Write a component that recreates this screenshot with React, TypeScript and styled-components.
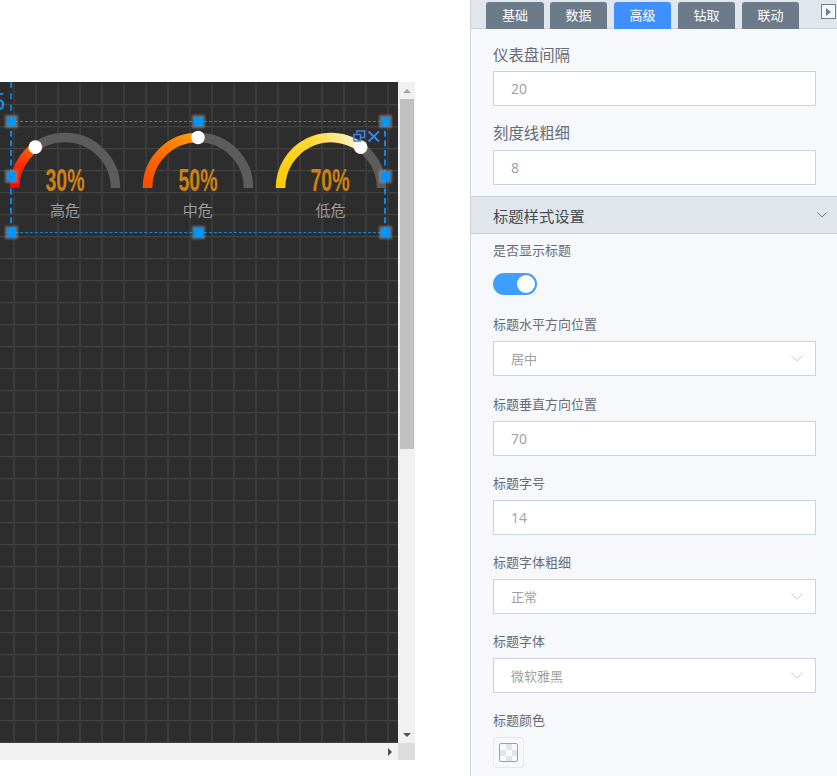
import React from "react";
import styled, { createGlobalStyle } from "styled-components";

const Global = createGlobalStyle`
  html, body { margin: 0; padding: 0; background: #fff; }
  body { font-family: "Noto Sans CJK SC", "Liberation Sans", sans-serif; }
  * { box-sizing: border-box; }
`;

const Page = styled.div`
  display: flex;
  width: 837px;
  height: 776px;
  overflow: hidden;
`;
const Stage = styled.div`
  width: 470px;
  padding-top: 82px;
  flex: none;
`;
const Frame = styled.div`
  display: grid;
  grid-template-columns: 398px 17px;
  grid-template-rows: 661px 17px;
  width: 415px;
`;
const Canvas = styled.div`
  position: relative;
  overflow: hidden;
  background-color: #2d2d2d;
  background-image:
    linear-gradient(to bottom, #424242 0, #424242 1px, #343434 1px, #343434 2px, transparent 2px),
    linear-gradient(to right, transparent 13px, #3a3a3a 13px, #3a3a3a 15px, transparent 15px);
  background-size: 22px 22px;
  box-shadow: inset 0 2px 0 #2d2d2d;
`;
const VTrack = styled.div`
  display: flex;
  flex-direction: column;
  align-items: center;
  background: #f1f1f1;
`;
const HTrack = styled.div`
  display: flex;
  justify-content: flex-end;
  align-items: center;
  background: #f1f1f1;
`;
const Corner = styled.div`
  background: #dcdcdc;
`;
const ArrowBox = styled.div<{ $end?: boolean }>`
  flex: none;
  width: 17px;
  height: 17px;
  display: flex;
  align-items: center;
  justify-content: center;
  margin-top: ${(p) => (p.$end ? "auto" : "0")};
`;
const Thumb = styled.div`
  width: 14px;
  height: 350px;
  margin-left: 1px;
  background: #c1c1c1;
`;
const TriUp = styled.div`
  width: 0;
  height: 0;
  border-left: 4px solid transparent;
  border-right: 4px solid transparent;
  border-bottom: 4px solid #a3a3a3;
`;
const TriDown = styled.div`
  width: 0;
  height: 0;
  border-left: 4px solid transparent;
  border-right: 4px solid transparent;
  border-top: 4px solid #505050;
`;
const TriRight = styled.div`
  width: 0;
  height: 0;
  border-top: 4px solid transparent;
  border-bottom: 4px solid transparent;
  border-left: 4px solid #505050;
`;
const StrayDigit = styled.div`
  position: absolute;
  left: -8px;
  top: 7px;
  font: 24px/26px "Liberation Sans", sans-serif;
  color: #0c93f5;
`;
const GuideLine = styled.div`
  position: absolute;
  left: 10px;
  top: 0;
  height: 40px;
  border-left: 2px dashed #0a7fd0;
`;
const Selection = styled.div`
  position: absolute;
  left: 10px;
  top: 39px;
  width: 376px;
  height: 112px;
  border-style: dashed;
  border-color: #0a8ae6;
  border-width: 1px 2px;
`;
const GaugeRow = styled.div`
  display: flex;
  gap: 22.75px;
  margin-left: -2px;
  padding-top: 11px;
`;
const Gauge = styled.div`
  display: flex;
  flex-direction: column;
  align-items: center;
  width: 110px;
`;
const GaugeArc = styled.svg`
  display: block;
  flex: none;
  overflow: visible;
`;
const GaugeValue = styled.div`
  margin-top: -23px;
  height: 31px;
  font: 700 31px/31px "Liberation Sans", sans-serif;
  color: #cf8210;
  transform: scaleX(0.63);
  white-space: nowrap;
`;
const GaugeLabel = styled.div`
  margin-top: 4px;
  font-size: 15px;
  line-height: 20px;
  color: #9c9c9c;
`;
const Handle = styled.div<{ $x: number; $y: number }>`
  position: absolute;
  left: ${(p) => p.$x - 4.5}px;
  top: ${(p) => p.$y - 4.5}px;
  width: 9px;
  height: 9px;
  background: #0095ff;
  box-shadow: 0 0 2px 2px rgba(150, 160, 170, 0.55);
`;
const ToolIcons = styled.svg`
  position: absolute;
  left: 353px;
  top: 48px;
`;

const Panel = styled.div`
  flex: 1;
  min-width: 0;
  height: 776px;
  background: #f6f8fb;
  border-left: 1px solid #c8d2e0;
`;
const TabStrip = styled.div`
  display: flex;
  gap: 7px;
  height: 29px;
  padding: 2px 1px 0 15px;
  background: #e1e6eb;
  border-bottom: 1px solid #c8d2e0;
`;
const Tab = styled.div<{ $active?: boolean }>`
  width: 57px;
  height: 27px;
  border-radius: 3px 3px 0 0;
  background: ${(p) => (p.$active ? "#3f8fff" : "#6c7a8a")};
  color: #fff;
  font-size: 13px;
  line-height: 26px;
  text-align: center;
  &:first-child {
    width: 58px;
    margin-right: -1px;
  }
`;
const Collapse = styled.div`
  margin-left: auto;
  margin-top: 2px;
  width: 15px;
  height: 15px;
  display: flex;
  align-items: center;
  justify-content: center;
  background: #f4f6f8;
  border: 1px solid #76808c;
`;
const CollapseTri = styled.div`
  width: 0;
  height: 0;
  border-top: 4px solid transparent;
  border-bottom: 4px solid transparent;
  border-left: 5px solid #76808c;
`;
const Group = styled.div<{ $gapBelow: number }>`
  padding: 0 21px 0 22px;
  margin-bottom: ${(p) => p.$gapBelow}px;
`;
const Field = styled.div<{ $top: number }>`
  padding-top: ${(p) => p.$top}px;
`;
const Label = styled.div<{ $large?: boolean; $gap?: number }>`
  height: 20px;
  margin-bottom: ${(p) => p.$gap ?? 6}px;
  font-size: ${(p) => (p.$large ? 15.4 : 13)}px;
  line-height: 18px;
  color: #666c75;
  white-space: nowrap;
`;
const InputBox = styled.div<{ $select?: boolean }>`
  display: flex;
  align-items: center;
  justify-content: space-between;
  width: 323px;
  height: 35px;
  padding: 0 12px 0 17px;
  background: #fff;
  border: 1px solid #c8d2e0;
  color: #a0a0a0;
  font-size: ${(p) => (p.$select ? 13 : 14)}px;
  font-family: ${(p) => (p.$select ? '"Noto Sans CJK SC"' : '"Open Sans"')}, sans-serif;
`;
const Header = styled.div`
  display: flex;
  align-items: center;
  justify-content: space-between;
  height: 38px;
  padding: 0 10px 1px 22px;
  background: #e1e6eb;
  border-top: 1px solid #c8d2e0;
  border-bottom: 1px solid #c8d2e0;
  color: #474c52;
  font-size: 15.3px;
`;
const Toggle = styled.div`
  display: flex;
  align-items: center;
  justify-content: flex-end;
  width: 44px;
  height: 22px;
  padding-right: 2px;
  border-radius: 11px;
  background: #409eff;
`;
const Knob = styled.div`
  width: 18px;
  height: 18px;
  border-radius: 50%;
  background: #fff;
`;
const Swatch = styled.div`
  display: flex;
  align-items: center;
  justify-content: center;
  width: 31px;
  height: 31px;
  border: 1px solid #e4e7ed;
  border-radius: 4px;
`;
const SwatchInner = styled.div`
  width: 19px;
  height: 19px;
  border: 1px solid #a0a0a0;
  border-radius: 2px;
  background: repeating-conic-gradient(#e4e4e4 0 25%, #fafafa 0 50%) 0 0 / 12px 12px;
`;

const Chevron = ({ color, size }: { color: string; size: number }) => (
  <svg width={size} height={size / 2 + 1} viewBox="0 0 12 7" fill="none">
    <path d="M0.5 0.5 L6 6 L11.5 0.5" stroke={color} strokeWidth="1" />
  </svg>
);

const gauges = [
  { id: "a", value: 30, label: "高危", from: "#ff0000", mid: "#ff3000", to: "#ff6a00" },
  { id: "b", value: 50, label: "中危", from: "#ff4a00", mid: "#ff7400", to: "#ffa010" },
  { id: "c", value: 70, label: "低危", from: "#ffcc00", mid: "#ffd836", to: "#fff4c8" },
];

const R = 50.5;
const C = 55;
const GaugeSvg = ({ id, value, from, mid, to }: { id: string; value: number; from: string; mid: string; to: string }) => {
  const a = Math.PI * (1 - value / 100);
  const kx = C + R * Math.cos(a);
  const ky = 55 - R * Math.sin(a);
  return (
    <GaugeArc width="110" height="55" viewBox="0 0 110 55">
      <defs>
        <linearGradient id={id} gradientUnits="userSpaceOnUse" x1="5" y1="55" x2={kx} y2={ky}>
          <stop offset="0" stopColor={from} />
          <stop offset="0.55" stopColor={mid} />
          <stop offset="1" stopColor={to} />
        </linearGradient>
      </defs>
      <path d={`M${C - R} 55 A${R} ${R} 0 0 1 ${C + R} 55`} fill="none" stroke="#5c5c5c" strokeWidth="9.5" />
      <path d={`M${C - R} 55 A${R} ${R} 0 0 1 ${kx} ${ky}`} fill="none" stroke={`url(#${id})`} strokeWidth="9.5" />
      <circle cx={kx} cy={ky} r="6.8" fill="#fff" />
    </GaugeArc>
  );
};

const handles: [number, number][] = [
  [11, 39.5], [198, 39.5], [385, 39.5],
  [11, 94.5], [385, 94.5],
  [11, 150], [198, 150], [385, 150],
];

const TextField = ({ label, value, top, gap }: { label: string; value: string; top: number; gap?: number }) => (
  <Field $top={top}>
    <Label $gap={gap}>{label}</Label>
    <InputBox>{value}</InputBox>
  </Field>
);
const SelectField = ({ label, value, top }: { label: string; value: string; top: number }) => (
  <Field $top={top}>
    <Label>{label}</Label>
    <InputBox $select>
      {value}
      <Chevron color="#c4ccd8" size={12} />
    </InputBox>
  </Field>
);

export default function App() {
  return (
    <Page>
      <Global />
      <Stage>
        <Frame>
          <Canvas>
            <StrayDigit>5</StrayDigit>
            <GuideLine />
            <Selection>
              <GaugeRow>
                {gauges.map((g) => (
                  <Gauge key={g.id}>
                    <GaugeSvg id={g.id} value={g.value} from={g.from} mid={g.mid} to={g.to} />
                    <GaugeValue>{g.value}%</GaugeValue>
                    <GaugeLabel>{g.label}</GaugeLabel>
                  </Gauge>
                ))}
              </GaugeRow>
            </Selection>
            {handles.map(([x, y]) => (
              <Handle key={`${x}-${y}`} $x={x} $y={y} />
            ))}
            <ToolIcons width="28" height="13" viewBox="0 0 28 13" fill="none" stroke="#3f83e0" strokeWidth="1.6">
              <path d="M4 3.5 V1 H11.5 V7.5 H8" />
              <rect x="1" y="4.5" width="6.5" height="6.5" />
              <path d="M15.5 1.5 L26 11.5 M26 1.5 L15.5 11.5" strokeWidth="2" />
            </ToolIcons>
          </Canvas>
          <VTrack>
            <ArrowBox><TriUp /></ArrowBox>
            <Thumb />
            <ArrowBox $end><TriDown /></ArrowBox>
          </VTrack>
          <HTrack>
            <ArrowBox><TriRight /></ArrowBox>
          </HTrack>
          <Corner />
        </Frame>
      </Stage>
      <Panel>
        <TabStrip>
          <Tab>基础</Tab>
          <Tab>数据</Tab>
          <Tab $active>高级</Tab>
          <Tab>钻取</Tab>
          <Tab>联动</Tab>
          <Collapse><CollapseTri /></Collapse>
        </TabStrip>
        <Group $gapBelow={11}>
          <Field $top={16}>
            <Label $large>仪表盘间隔</Label>
            <InputBox>20</InputBox>
          </Field>
          <Field $top={17}>
            <Label $large $gap={7}>刻度线粗细</Label>
            <InputBox>8</InputBox>
          </Field>
        </Group>
        <Header>
          标题样式设置
          <Chevron color="#5f6872" size={10} />
        </Header>
        <Group $gapBelow={0}>
          <Field $top={7}>
            <Label $gap={12}>是否显示标题</Label>
            <Toggle><Knob /></Toggle>
          </Field>
          <SelectField label="标题水平方向位置" value="居中" top={20.4} />
          <TextField label="标题垂直方向位置" value="70" top={18.2} />
          <TextField label="标题字号" value="14" top={18.2} />
          <SelectField label="标题字体粗细" value="正常" top={18.2} />
          <SelectField label="标题字体" value="微软雅黑" top={18.2} />
          <Field $top={18.2}>
            <Label>标题颜色</Label>
            <Swatch><SwatchInner /></Swatch>
          </Field>
        </Group>
      </Panel>
    </Page>
  );
}
